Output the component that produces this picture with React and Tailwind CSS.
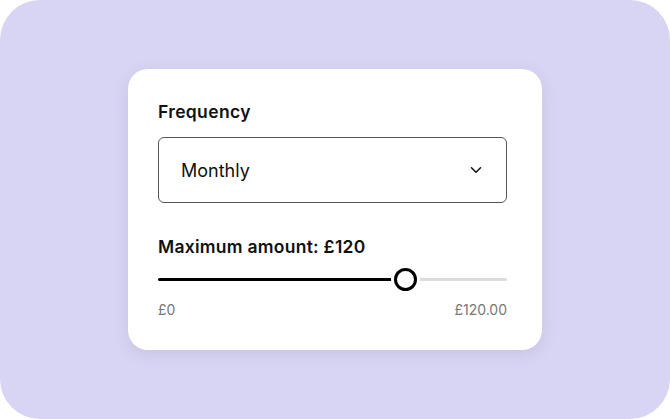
import React from 'react';
import { ChevronDown } from 'lucide-react';

const App = () => {
  const value = 120;
  const pct = 71;

  return (
    <div className="w-[670px] h-[419px] bg-white">
      <div className="w-full h-full rounded-[40px] bg-[#d8d4f3] flex items-center justify-center font-['Inter',sans-serif]">
        <div className="w-[414px] h-[281px] bg-white rounded-[20px] shadow-[0_4px_16px_rgba(80,70,140,0.12)] pl-[30px] pr-[35px] pt-[32px]">
          <div className="text-[17.5px] font-semibold tracking-[0.02em] text-[#111] leading-[22px]">Frequency</div>
          <button
            type="button"
            className="mt-[14px] w-full h-[66px] border border-[#555] rounded-[6px] flex items-center justify-between pl-[22px] pr-[21px]"
          >
            <span className="text-[18px] text-[#111]">Monthly</span>
            <ChevronDown className="w-[18px] h-[18px] text-[#111]" strokeWidth={2} />
          </button>
          <div className="mt-[33px] text-[17.5px] font-semibold tracking-[0.015em] text-[#111] leading-[22px]">
            Maximum amount: £{value}
          </div>
          <div className="relative mt-[10px] h-[22px] flex items-center">
            <div className="w-full h-[3px] bg-[#dcdcdc] rounded-full" />
            <div className="absolute left-0 h-[3px] bg-black rounded-full" style={{ width: `${pct}%` }} />
            <div
              className="absolute w-[23px] h-[23px] -ml-[11.5px] rounded-full border-[3px] border-black bg-white shadow-[0_0_0_3px_white]"
              style={{ left: `${pct}%` }}
            />
          </div>
          <div className="mt-[9px] flex justify-between text-[14px] text-[#777]">
            <span>£0</span>
            <span>£120.00</span>
          </div>
        </div>
      </div>
    </div>
  );
};

export default App;
